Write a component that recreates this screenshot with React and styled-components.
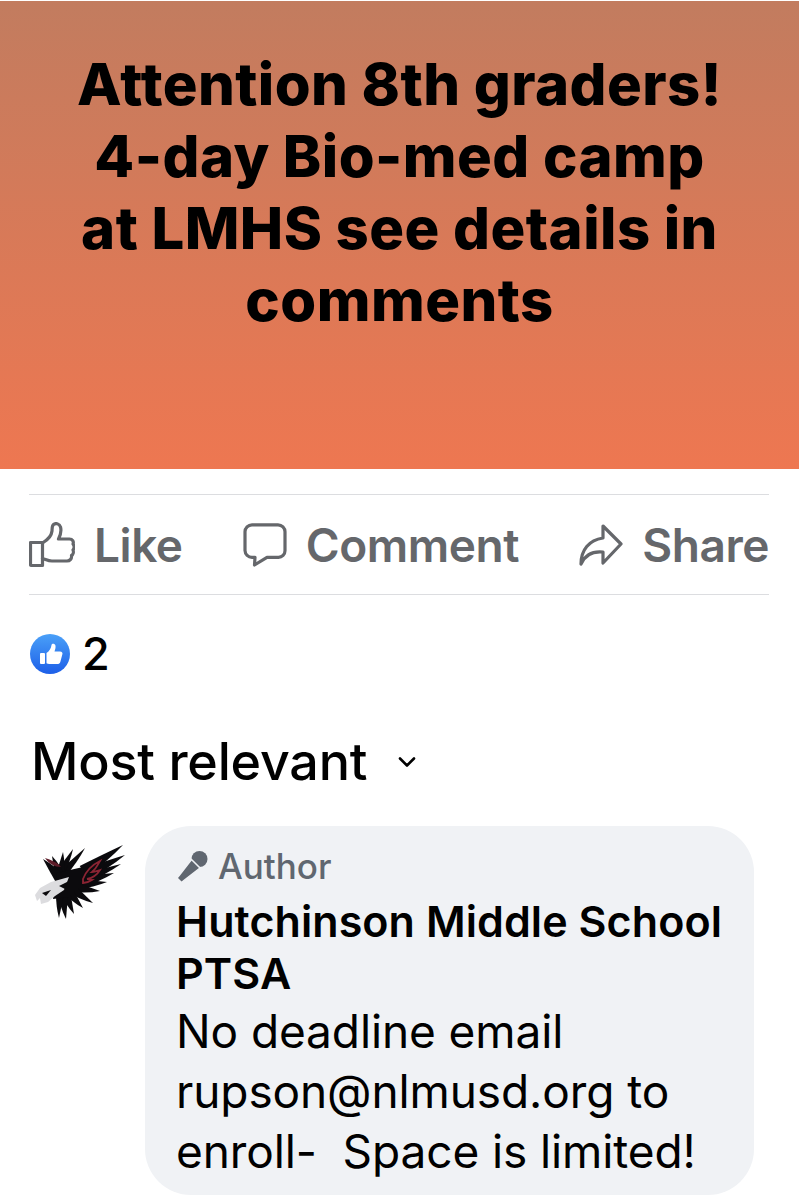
import styled, { createGlobalStyle } from 'styled-components';

const GlobalStyle = createGlobalStyle`
  html, body {
    margin: 0;
    padding: 0;
    background: #fff;
  }
  body {
    font-family: Inter, "Liberation Sans", sans-serif;
    font-variant-ligatures: none;
    overflow: hidden;
  }
`;

const Page = styled.div`
  width: 799px;
  height: 1200px;
  overflow: hidden;
  background: #fff;
`;

const Banner = styled.div`
  height: 468px;
  margin-top: 1px;
  padding-top: 47px;
  box-sizing: border-box;
  background: linear-gradient(180deg, #c27c5f 0%, #ee7751 100%);
  text-align: center;
  color: #000;
  font-size: 58px;
  font-weight: 800;
  line-height: 72px;
  letter-spacing: 0.45px;
`;

const BannerLine = styled.div`
  white-space: nowrap;
`;

const Actions = styled.div`
  display: flex;
  justify-content: space-between;
  align-items: center;
  height: 99px;
  margin: 25px 30px 0 29px;
  border-top: 1px solid #dcdde0;
  border-bottom: 1px solid #dcdde0;
`;

const Action = styled.div`
  display: flex;
  align-items: center;
  gap: 19px;
  color: #65676b;
  font-size: 46px;
  font-weight: 600;
  letter-spacing: -0.45px;
`;

const Reactions = styled.div`
  display: flex;
  align-items: center;
  gap: 12px;
  margin: 39px 0 0 30px;
  font-size: 45px;
  line-height: 40px;
  font-weight: 500;
  color: #000;
`;

const Sort = styled.div`
  display: flex;
  align-items: center;
  gap: 30px;
  margin: 58px 0 0 31px;
  font-size: 52px;
  line-height: 60px;
  font-weight: 500;
  color: #000;
  letter-spacing: -0.2px;
`;

const Comment = styled.div`
  display: flex;
  align-items: flex-start;
  margin: 34px 0 0 33px;
`;

const Avatar = styled.svg`
  width: 94px;
  height: 80px;
  margin-top: 15px;
  flex: none;
`;

const Bubble = styled.div`
  width: 609px;
  height: 369px;
  margin-left: 18px;
  padding: 17px 20px 0 31px;
  box-sizing: border-box;
  flex: none;
  background: #f0f2f5;
  border-radius: 46px;
`;

const AuthorTag = styled.div`
  display: flex;
  align-items: center;
  gap: 9px;
  color: #606770;
  font-size: 35px;
  line-height: 46px;
  font-weight: 500;
`;

const Name = styled.div`
  margin-top: 6px;
  font-size: 43px;
  line-height: 52px;
  font-weight: 600;
  color: #000;
  letter-spacing: 0.08px;
`;

const Body = styled.div`
  margin-top: 2px;
  font-size: 46px;
  line-height: 60px;
  font-weight: 400;
  color: #000;
  letter-spacing: -0.1px;
  white-space: pre;
`;

const LikeIcon = () => (
  <svg width="46" height="46" viewBox="0 0 46 46" fill="none" stroke="#65676b" strokeWidth="3.2" strokeLinejoin="round" strokeLinecap="round">
    <path d="M1.5 20.5h12v23h-11a1 1 0 0 1-1-1z" />
    <path d="M13.5 21c5-3 9-7 9.500-12 .2-2-.2-5 1.500-6.500 2.500-2 6-.5 7 2.500 1 3.500-.5 9-2 12h11c3 0 4.500 2.500 3.500 5 1.500 1.500 1.500 4.500 0 6 .8 2 .3 4.500-1.500 5.500.5 3-1.500 5.500-4.500 5.500H23c-4 0-6-1.500-9.500-2.500" />
  </svg>
);

const CommentIcon = () => (
  <svg width="44" height="44" viewBox="0 0 44 44" fill="none" stroke="#65676b" strokeWidth="3.2" strokeLinejoin="round">
    <path d="M9 1.800h26a7 7 0 0 1 7 7v19a6.500 6.500 0 0 1-6.500 6.500H24L11.500 42l.5-7.700H9A7 7 0 0 1 2 27.500V8.800a7 7 0 0 1 7-7z" />
  </svg>
);

const ShareIcon = () => (
  <svg width="44" height="42" viewBox="0 0 44 42" fill="none" stroke="#65676b" strokeWidth="3.2" strokeLinejoin="round" strokeLinecap="round">
    <path d="M24 2l18 18-18 19v-11C14 27 6 31 2 40c0-14 8-24 22-26z" />
  </svg>
);

const ThumbBadge = () => (
  <svg width="40" height="40" viewBox="0 0 40 40">
    <defs>
      <linearGradient id="badge" x1="0" y1="0" x2="0" y2="1">
        <stop offset="0" stopColor="#4aa0f8" />
        <stop offset="1" stopColor="#1d5fe8" />
      </linearGradient>
    </defs>
    <circle cx="20" cy="20" r="20" fill="url(#badge)" />
    <rect x="10" y="19" width="5" height="11" rx="1" fill="#fff" />
    <path d="M16.500 19c3-2 4.500-4.500 5-8 .3-1.800 3.500-1.500 4 .8.3 1.800-.4 4-1 5.700h5.500c2 0 3 1.500 2.300 3l-2 7.500c-.4 1.500-1.500 2-3 2h-8c-1.200 0-2-.3-2.800-.8z" fill="#fff" />
  </svg>
);

const Chevron = () => (
  <svg width="20" height="12" viewBox="0 0 20 12" fill="none" stroke="#000" strokeWidth="2.600" strokeLinecap="round" strokeLinejoin="round">
    <path d="M3 2.500l7 7 7-7" />
  </svg>
);

const MicIcon = () => (
  <svg width="33" height="33" viewBox="0 0 33 33" fill="#606770">
    <circle cx="23.500" cy="9" r="8" />
    <path d="M15.500 9.500l8.500 8.500L8.500 30l-3 2.500-4.500-4.500 2.500-3z" stroke="#f0f2f5" strokeWidth="1.500" />
  </svg>
);

// tip x, tip y, base x, base y, half width of the feather at its root
const wingFeathers = [
  [90, 4, 50, 30, 6], [92, 14, 50, 34, 6], [88, 23, 50, 38, 5],
  [81, 32, 48, 41, 5], [74, 41, 44, 43, 5], [67, 50, 40, 46, 5],
  [52, 7, 30, 32, 4], [40, 8, 27, 32, 4], [30, 11, 27, 34, 4],
  [19, 15, 28, 38, 5], [10, 18, 30, 42, 6],
  [60, 62, 36, 46, 5], [50, 67, 34, 48, 5], [41, 73, 32, 50, 5],
  [33, 78, 30, 52, 5], [26, 77, 27, 52, 4],
];

const featherPath = ([tx, ty, bx, by, w]) => {
  const dx = tx - bx;
  const dy = ty - by;
  const len = Math.hypot(dx, dy);
  const nx = (-dy / len) * w;
  const ny = (dx / len) * w;
  return `M${bx + nx} ${by + ny}Q${bx + dx * 0.55 + nx * 0.9} ${by + dy * 0.55 + ny * 0.9} ${tx} ${ty}Q${bx + dx * 0.55 - nx * 0.5} ${by + dy * 0.55 - ny * 0.5} ${bx - nx} ${by - ny}z`;
};

const EagleLogo = () => (
  <Avatar viewBox="0 0 94 80">
    {wingFeathers.map((f) => (
      <path key={`${f[0]}-${f[1]}`} d={featherPath(f)} fill="#0b0a0d" />
    ))}
    <path d="M24 32l26-6 4 14-18 16-16 2z" fill="#0b0a0d" />
    <path d="M50 38c3-8 9-14 17-18-3 5-4 8-8 11 3 0 5-1 8-2-3 5-8 8-13 9 2 0 4 1 5 1-3 2-6 3-9 3z" fill="none" stroke="#8b2433" strokeWidth="1.800" />
    <path d="M12 17c6 2 12 4 16 9-6 0-12-3-16-9z" fill="#5d1b28" />
    <path d="M36 36L18 41 7 47 2 54l2 6 3-3 1 6 7-2 7-6 9-6z" fill="#dcdcdf" />
    <path d="M9 52l9-3-5 6z" fill="#0b0a0d" />
    <path d="M26 45l10-5-4 8z" fill="#0b0a0d" />
  </Avatar>
);

export default function App() {
  return (
    <Page>
      <GlobalStyle />
      <Banner>
        <BannerLine>Attention 8th graders!</BannerLine>
        <BannerLine>4-day Bio-med camp</BannerLine>
        <BannerLine>at LMHS see details in</BannerLine>
        <BannerLine>comments</BannerLine>
      </Banner>
      <Actions>
        <Action><LikeIcon />Like</Action>
        <Action><CommentIcon />Comment</Action>
        <Action><ShareIcon />Share</Action>
      </Actions>
      <Reactions>
        <ThumbBadge />
        2
      </Reactions>
      <Sort>
        Most relevant
        <Chevron />
      </Sort>
      <Comment>
        <EagleLogo />
        <Bubble>
          <AuthorTag><MicIcon />Author</AuthorTag>
          <Name>Hutchinson Middle School PTSA</Name>
          <Body>{'No deadline email\nrupson@nlmusd.org to\nenroll-  Space is limited!'}</Body>
        </Bubble>
      </Comment>
    </Page>
  );
}
